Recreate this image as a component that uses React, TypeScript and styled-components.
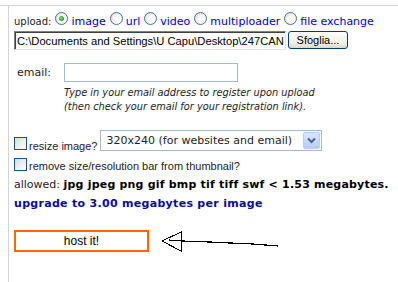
import React from 'react'
import styled, { createGlobalStyle } from 'styled-components'

const GlobalStyle = createGlobalStyle`
  html, body {
    margin: 0;
    padding: 0;
    background: #ffffff;
  }
  body {
    font-family: "DejaVu Sans", Verdana, sans-serif;
    color: #222222;
  }
`

const Frame = styled.div`
  margin-top: 5px;
  border-top: 1px solid #d4d4d4;
  height: 276px;
  overflow: hidden;
`

const Panel = styled.div`
  margin-left: 8px;
  border-left: 1px solid #d4d4d4;
  padding-left: 5px;
  height: 100%;
  display: flex;
  flex-direction: column;
`

const UploadRow = styled.div`
  margin-top: 6px;
  height: 16px;
  display: flex;
  align-items: flex-end;
  white-space: nowrap;
`

const UploadLabel = styled.span`
  font-size: 10px;
  line-height: 12px;
  margin-right: 4px;
`

const Radio = styled.span<{ checked?: boolean }>`
  position: relative;
  box-sizing: border-box;
  width: 13px;
  height: 13px;
  border-radius: 50%;
  border: 1px solid #4f6d8f;
  background: radial-gradient(circle at 65% 65%, #ffffff 30%, #d6d3c6 100%);
  align-self: flex-start;
  margin-right: 3px;

  &::after {
    content: '';
    display: ${p => (p.checked ? 'block' : 'none')};
    position: absolute;
    left: 3px;
    top: 3px;
    width: 5px;
    height: 5px;
    border-radius: 50%;
    background: radial-gradient(circle at 40% 40%, #7ee27e 0%, #21a121 70%);
  }
`

const Choice = styled.span`
  font-size: 11px;
  line-height: 13px;
  color: #0000cc;
  margin-right: 4px;
`

const FileRow = styled.div`
  margin-top: 3px;
  display: flex;
  align-items: flex-start;
`

const FilePath = styled.div`
  box-sizing: border-box;
  width: 272px;
  height: 19px;
  padding: 2px 0 0 2px;
  border-top: 1px solid #808080;
  border-left: 1px solid #808080;
  border-right: 1px solid #e6e6e6;
  border-bottom: 1px solid #e6e6e6;
  box-shadow: inset 1px 1px 0 #404040;
  font-family: "Liberation Sans", Tahoma, sans-serif;
  font-size: 11.2px;
  line-height: 14px;
  white-space: nowrap;
  color: #000000;
`

const BrowseButton = styled.button`
  box-sizing: border-box;
  margin-left: 2px;
  width: 60px;
  height: 18px;
  padding: 0;
  border: 1px solid #003c74;
  border-radius: 3px;
  background: linear-gradient(#ffffff, #f1efe6 70%, #dcd8c8);
  font-family: "Liberation Sans", Tahoma, sans-serif;
  font-size: 11px;
  color: #000000;
`

const EmailRow = styled.div`
  margin-top: 13px;
  display: flex;
  align-items: center;
`

const FieldLabel = styled.span`
  box-sizing: border-box;
  width: 50px;
  padding-left: 3px;
  font-size: 11px;
`

const TextBox = styled.div`
  box-sizing: border-box;
  width: 174px;
  height: 19px;
  border: 1px solid #a5b9cf;
  background: #ffffff;
`

const Hint = styled.div`
  margin: 4px 0 0 50px;
  font-size: 9.8px;
  line-height: 14px;
  font-style: italic;
  white-space: nowrap;
`

const OptionRow = styled.div<{ gap: number }>`
  margin-top: ${p => p.gap}px;
  display: flex;
  align-items: flex-end;
  white-space: nowrap;
`

const Checkbox = styled.span<{ lift?: number }>`
  box-sizing: border-box;
  width: 13px;
  height: 13px;
  border: 1px solid #1c5180;
  background: linear-gradient(135deg, #dcdcd7, #ffffff);
  margin-right: 2px;
  margin-bottom: ${p => p.lift || 0}px;
`

const OptionText = styled.span`
  font-family: "Liberation Sans", Tahoma, sans-serif;
  font-size: 11px;
  line-height: 12px;
  margin-bottom: -1px;
`

const Select = styled.div`
  box-sizing: border-box;
  margin-left: 3px;
  width: 222px;
  height: 21px;
  border: 1px solid #a5b9cf;
  display: flex;
  align-items: center;
  padding: 1px;
  font-size: 11px;
`

const SelectText = styled.span`
  flex: 1;
  padding-left: 4px;
`

const DropButton = styled.span`
  box-sizing: border-box;
  width: 17px;
  height: 17px;
  border: 1px solid #b9cdf7;
  border-radius: 2px;
  background: linear-gradient(#dbe6fd, #b7cbf7);
  display: flex;
  align-items: center;
  justify-content: center;
`

const InfoLine = styled.div<{ gap: number; tone?: string }>`
  margin-top: ${p => p.gap}px;
  font-size: 11px;
  line-height: 16px;
  white-space: nowrap;
  color: ${p => p.tone || '#222222'};
`

const Strong = styled.b`
  color: #000000;
  letter-spacing: 0.2px;
`

const Upgrade = styled.b`
  letter-spacing: 0.3px;
`

const HostRow = styled.div`
  margin-top: 18px;
  display: flex;
  align-items: flex-start;
`

const HostButton = styled.div`
  box-sizing: border-box;
  width: 135px;
  height: 22px;
  border: 2px solid #ff6600;
  display: flex;
  align-items: center;
  justify-content: center;
  font-family: "Liberation Sans", Tahoma, sans-serif;
  font-size: 12px;
  color: #000000;
`

const Arrow = styled.svg`
  margin-left: 11px;
  margin-top: -1px;
`

const choices = ['image', 'url', 'video', 'multiploader', 'file exchange']

export default function App() {
  return (
    <>
      <GlobalStyle />
      <Frame>
        <Panel>
          <UploadRow>
            <UploadLabel>upload:</UploadLabel>
            {choices.map((c, i) => (
              <React.Fragment key={c}>
                <Radio checked={i === 0} />
                <Choice>{c}</Choice>
              </React.Fragment>
            ))}
          </UploadRow>

          <FileRow>
            <FilePath>C:\Documents and Settings\U Capu\Desktop\247CAN</FilePath>
            <BrowseButton>Sfoglia...</BrowseButton>
          </FileRow>

          <EmailRow>
            <FieldLabel>email:</FieldLabel>
            <TextBox />
          </EmailRow>

          <Hint>
            Type in your email address to register upon upload
            <br />
            (then check your email for your registration link).
          </Hint>

          <OptionRow gap={16}>
            <Checkbox lift={1} />
            <OptionText>resize image?</OptionText>
            <Select>
              <SelectText>320x240 (for websites and email)</SelectText>
              <DropButton>
                <svg width="9" height="7" viewBox="0 0 9 7">
                  <path d="M1 1.5 L4.5 5 L8 1.5" fill="none" stroke="#4d6185" strokeWidth="2" />
                </svg>
              </DropButton>
            </Select>
          </OptionRow>

          <OptionRow gap={7}>
            <Checkbox />
            <OptionText>remove size/resolution bar from thumbnail?</OptionText>
          </OptionRow>

          <InfoLine gap={6}>
            allowed: <Strong>jpg jpeg png gif bmp tif tiff swf &lt; 1.53 megabytes.</Strong>
          </InfoLine>

          <InfoLine gap={3} tone="#0a0a9c">
            <Upgrade>upgrade to 3.00 megabytes per image</Upgrade>
          </InfoLine>

          <HostRow>
            <HostButton>host it!</HostButton>
            <Arrow width="124" height="26" viewBox="0 0 124 26" shapeRendering="crispEdges">
              <path d="M2 12 L21 3 L21 22 Z" fill="none" stroke="#000" strokeWidth="1" />
              <path d="M9 11 L22 12 L50 13 L70 14 L93 15 L118 17" fill="none" stroke="#000" strokeWidth="1.2" />
            </Arrow>
          </HostRow>
        </Panel>
      </Frame>
    </>
  )
}
